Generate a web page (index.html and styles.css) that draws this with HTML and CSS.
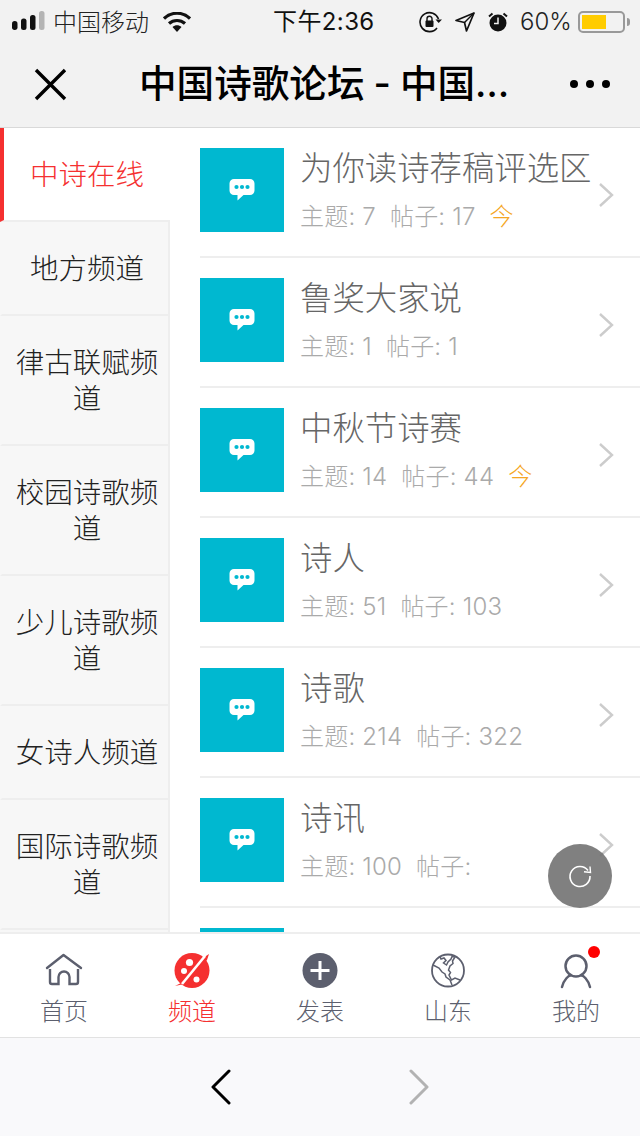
FILE: index.html
```html
<!DOCTYPE html>
<html lang="zh-CN">
<head>
<meta charset="utf-8">
<title>中国诗歌论坛</title>
<link rel="stylesheet" href="styles.css">
</head>
<body>
<div class="app">
  <header class="status">
    <div class="status-left">
      <svg class="signal" width="34" height="22" viewBox="0 0 34 22"><rect x="0" y="10" width="5.5" height="9" rx="2.7" fill="#111"/><rect x="9" y="7.5" width="5.5" height="11.5" rx="2.5" fill="#111"/><rect x="18" y="4" width="5.5" height="15" rx="2.5" fill="#111"/><rect x="27" y="0" width="5.5" height="19" rx="2.5" fill="#b4b4b4"/></svg>
      <span class="carrier">中国移动</span>
      <svg class="wifi" width="28" height="20" viewBox="0 0 28 20"><path d="M1 6.5C8.500 -.5 19.500 -.5 27 6.500" fill="none" stroke="#111" stroke-width="3.200"/><path d="M6 11.500C10.500 7.500 17.500 7.500 22 11.500" fill="none" stroke="#111" stroke-width="3.200"/><path d="M9.500 15C12 12.800 16 12.800 18.500 15L14 20Z" fill="#111"/></svg>
    </div>
    <div class="status-time">下午2:36</div>
    <div class="status-right">
      <svg width="24" height="22" viewBox="0 0 24 22"><path d="M19.500 8A9.500 9.500 0 1 0 18 17" fill="none" stroke="#111" stroke-width="1.600"/><path d="M16.500 8.500H23L19.700 12Z" fill="#111"/><rect x="6.500" y="9.500" width="8" height="6.500" rx="1" fill="#111"/><path d="M8 10V7.800a2.500 2.500 0 0 1 5 0V10" fill="none" stroke="#111" stroke-width="1.400"/></svg>
      <svg class="loc" width="20" height="20" viewBox="0 0 20 20"><path d="M19 1L1 8.500L9.500 10.500L11.500 19Z" fill="none" stroke="#111" stroke-width="1.700" stroke-linejoin="round"/><path d="M19 1L9.500 10.500" stroke="#111" stroke-width="1.500"/></svg>
      <svg class="alarm" width="20" height="20" viewBox="0 0 20 20"><circle cx="10" cy="11" r="8.500" fill="#111"/><path d="M10 5.500V11.500H6" fill="none" stroke="#f2f2f2" stroke-width="1.500"/><path d="M1 4.500L4.500 1.500M19 4.500L15.500 1.500" stroke="#111" stroke-width="2"/></svg>
      <span class="pct">60%</span>
      <div class="battery"><div class="battery-fill"></div></div>
      <div class="battery-nub"></div>
    </div>
  </header>

  <nav class="navbar">
    <svg class="nav-close" width="34" height="34" viewBox="0 0 34 34"><path d="M3 3L32 32M32 3L3 32" stroke="#000" stroke-width="3.400" fill="none"/></svg>
    <div class="nav-title">中国诗歌论坛 - 中国诗歌网</div>
    <div class="nav-more"><i></i><i></i><i></i></div>
  </nav>

  <main class="content">
    <aside class="side">
      <div class="side-item active">中诗在线</div>
      <div class="side-item">地方频道</div>
      <div class="side-item">律古联赋频道</div>
      <div class="side-item">校园诗歌频道</div>
      <div class="side-item">少儿诗歌频道</div>
      <div class="side-item">女诗人频道</div>
      <div class="side-item">国际诗歌频道</div>
    </aside>
    <section class="list">
      <article class="row">
        <div class="tile"><svg width="26" height="24" viewBox="0 0 26 24"><use href="#bubble"/></svg></div>
        <div class="info"><h3 class="name">为你读诗荐稿评选区</h3><p class="meta"><span>主题: 7</span><span>帖子: 17</span><span class="today">今</span></p></div>
        <svg class="chev" width="16" height="26" viewBox="0 0 16 26"><path d="M2 2L14 13L2 24" fill="none" stroke="#ccc" stroke-width="2.400"/></svg>
      </article>
      <article class="row">
        <div class="tile"><svg width="26" height="24" viewBox="0 0 26 24"><use href="#bubble"/></svg></div>
        <div class="info"><h3 class="name">鲁奖大家说</h3><p class="meta"><span>主题: 1</span><span>帖子: 1</span></p></div>
        <svg class="chev" width="16" height="26" viewBox="0 0 16 26"><path d="M2 2L14 13L2 24" fill="none" stroke="#ccc" stroke-width="2.400"/></svg>
      </article>
      <article class="row">
        <div class="tile"><svg width="26" height="24" viewBox="0 0 26 24"><use href="#bubble"/></svg></div>
        <div class="info"><h3 class="name">中秋节诗赛</h3><p class="meta"><span>主题: 14</span><span>帖子: 44</span><span class="today">今</span></p></div>
        <svg class="chev" width="16" height="26" viewBox="0 0 16 26"><path d="M2 2L14 13L2 24" fill="none" stroke="#ccc" stroke-width="2.400"/></svg>
      </article>
      <article class="row">
        <div class="tile"><svg width="26" height="24" viewBox="0 0 26 24"><use href="#bubble"/></svg></div>
        <div class="info"><h3 class="name">诗人</h3><p class="meta"><span>主题: 51</span><span>帖子: 103</span></p></div>
        <svg class="chev" width="16" height="26" viewBox="0 0 16 26"><path d="M2 2L14 13L2 24" fill="none" stroke="#ccc" stroke-width="2.400"/></svg>
      </article>
      <article class="row">
        <div class="tile"><svg width="26" height="24" viewBox="0 0 26 24"><use href="#bubble"/></svg></div>
        <div class="info"><h3 class="name">诗歌</h3><p class="meta"><span>主题: 214</span><span>帖子: 322</span></p></div>
        <svg class="chev" width="16" height="26" viewBox="0 0 16 26"><path d="M2 2L14 13L2 24" fill="none" stroke="#ccc" stroke-width="2.400"/></svg>
      </article>
      <article class="row">
        <div class="tile"><svg width="26" height="24" viewBox="0 0 26 24"><use href="#bubble"/></svg></div>
        <div class="info"><h3 class="name">诗讯</h3><p class="meta"><span>主题: 100</span><span>帖子:</span></p></div>
        <svg class="chev" width="16" height="26" viewBox="0 0 16 26"><path d="M2 2L14 13L2 24" fill="none" stroke="#ccc" stroke-width="2.400"/></svg>
      </article>
      <article class="row">
        <div class="tile"></div>
      </article>
    </section>
    <div class="fab">
      <svg width="26" height="26" viewBox="0 0 26 26"><path d="M21 7.500A10 10 0 1 0 23 13" fill="none" stroke="#fff" stroke-width="1.600"/><path d="M17 8.800L23.500 9.500L23 3.500" fill="none" stroke="#fff" stroke-width="1.400"/></svg>
    </div>
  </main>

  <footer class="tabs">
    <div class="tab">
      <svg width="40" height="40" viewBox="0 0 40 40"><path d="M3 17L19.500 4L37 17" fill="none" stroke="#5c5f6e" stroke-width="2.400" stroke-linecap="round" stroke-linejoin="round"/><path d="M6 18V31a2 2 0 0 0 2 2H14.500V26a5.500 5.500 0 0 1 11 0V33H32a2 2 0 0 0 2-2V18" fill="none" stroke="#5c5f6e" stroke-width="2.400"/></svg>
      <span>首页</span>
    </div>
    <div class="tab on">
      <svg width="40" height="40" viewBox="0 0 40 40"><circle cx="20" cy="19.500" r="17.500" fill="#f53030"/><path d="M3 35L11 31L34 5L37 3L35 9L12 33Z" fill="#f53030"/><path d="M10 33L33 5" stroke="#fff" stroke-width="2.600"/><circle cx="17.500" cy="11.500" r="3.600" fill="#fff"/><circle cx="12" cy="20" r="3" fill="#fff"/><circle cx="24.500" cy="28.500" r="3" fill="#fff"/></svg>
      <span>频道</span>
    </div>
    <div class="tab">
      <svg width="40" height="40" viewBox="0 0 40 40"><circle cx="20" cy="19.500" r="17.500" fill="#5c5f6e"/><path d="M20 10V29M10.500 19.500H29.500" stroke="#fff" stroke-width="3"/></svg>
      <span>发表</span>
    </div>
    <div class="tab">
      <svg width="40" height="40" viewBox="0 0 40 40"><circle cx="20" cy="19.500" r="16" fill="none" stroke="#5c5f6e" stroke-width="1.800"/><path d="M12 5.500L13 8L16 7L18 9.500L15.500 12L18.500 14L20 11L23 8L24 5.500L27 6L24.500 10L25 12.500L22 15L20.500 19L22.500 21.500L21 24L23.500 29L27 27L32 29" fill="none" stroke="#5c5f6e" stroke-width="1.500"/><path d="M5 14L11 17L14 21L17 23L18 26L22 29L24 34" fill="none" stroke="#5c5f6e" stroke-width="1.500"/></svg>
      <span>山东</span>
    </div>
    <div class="tab">
      <svg width="40" height="40" viewBox="0 0 40 40"><circle cx="20" cy="15" r="10.500" fill="none" stroke="#5c5f6e" stroke-width="2.500"/><path d="M6 36C8 28 13 24.500 14.500 24.500M34 36C32 28 27 24.500 25.500 24.500" fill="none" stroke="#5c5f6e" stroke-width="2.500" stroke-linecap="round"/></svg>
      <span>我的</span>
      <i class="badge"></i>
    </div>
  </footer>

  <div class="browser">
    <svg width="22" height="36" viewBox="0 0 22 36"><path d="M19 2L3 18L19 34" fill="none" stroke="#000" stroke-width="3" stroke-linecap="round" stroke-linejoin="round"/></svg>
    <svg width="22" height="36" viewBox="0 0 22 36"><path d="M3 2L19 18L3 34" fill="none" stroke="#b2b2b2" stroke-width="3" stroke-linecap="round" stroke-linejoin="round"/></svg>
  </div>
</div>
<svg class="defs" width="0" height="0"><defs><g id="bubble"><path d="M5 1H21a4.500 4.500 0 0 1 4.500 4.500V12.500A4.500 4.500 0 0 1 21 17H14.500L8.500 22.500V17H5A4.500 4.500 0 0 1 .5 12.500V5.500A4.500 4.500 0 0 1 5 1Z" fill="#fff"/><circle cx="7.500" cy="9" r="2.100" fill="#00b8d0"/><circle cx="13" cy="9" r="2.100" fill="#00b8d0"/><circle cx="18.500" cy="9" r="2.100" fill="#00b8d0"/></g></defs></svg>
</body>
</html>
```
FILE: styles.css
```css
* { box-sizing: border-box; }
html, body { margin: 0; padding: 0; }
body {
  width: 640px;
  height: 1136px;
  overflow: hidden;
  background: #fff;
  font-family: "Liberation Sans", "Noto Sans CJK SC", sans-serif;
}
.defs { position: absolute; }
.app { width: 640px; height: 1136px; display: flex; flex-direction: column; }

.status {
  height: 44px;
  flex: none;
  background: #f2f2f2;
  display: grid;
  grid-template-columns: 273px 146px 1fr;
  align-items: center;
  color: #222;
  font-size: 24px;
  font-family: "Inter", "Noto Sans CJK SC", sans-serif;
}
.status-left { display: flex; align-items: center; padding-left: 12px; }
.carrier { margin-left: 7px; padding-bottom: 3px; color: #222; font-family: "Noto Sans CJK SC", sans-serif; font-weight: 300; line-height: 40px; }
.wifi { margin-left: 14px; }
.status-time { color: #111; line-height: 40px; letter-spacing: .4px; font-family: "Inter", "Noto Sans CJK SC", sans-serif; }
.status-right { display: flex; align-items: center; }
.loc { margin-left: 12px; }
.alarm { margin-left: 13px; }
.pct { margin-left: 12px; padding-bottom: 2px; color: #222; font-family: "Inter", sans-serif; font-weight: 300; }
.battery { margin-left: 6px; width: 47px; height: 22px; border: 2px solid #999; border-radius: 5px; padding: 2px; }
.battery-fill { width: 24px; height: 14px; background: #fc0; }
.battery-nub { width: 3px; height: 8px; margin-left: 2px; background: #999; border-radius: 0 3px 3px 0; }

.navbar {
  height: 84px;
  flex: none;
  background: #f2f2f2;
  border-bottom: 1px solid #d9d9d9;
  display: flex;
  align-items: center;
  padding: 0 30px 3px 33px;
}
.nav-close { flex: none; }
.nav-title {
  width: 378px;
  margin-left: 72px;
  font-family: "Inter", "Noto Sans CJK SC", sans-serif;
  font-size: 37.6px;
  font-weight: 500;
  word-spacing: -1px;
  color: #000;
  white-space: nowrap;
  overflow: hidden;
  text-overflow: ellipsis;
  line-height: 50px;
}
.nav-more { margin-left: auto; display: flex; gap: 8px; }
.nav-more i { width: 8px; height: 8px; border-radius: 50%; background: #000; }

.content { flex: 1; min-height: 0; position: relative; display: flex; overflow: hidden; }
.side { width: 170px; flex: none; background: #f7f7f7; border-right: 2px solid #eee; }
.side-item {
  padding: 27px 8px 29px 12px;
  background: #f7f7f7;
  border-bottom: 2px solid #eee;
  border-left: 2px solid #f7f7f7;
  font-size: 28.5px;
  font-weight: 300;
  line-height: 36px;
  color: #222;
  text-align: center;
  font-family: "Noto Sans CJK SC", sans-serif;
}
.side-item.active {
  margin-right: -2px;
  background: #fff;
  color: #f53030;
  border-left: 4px solid #f53030;
  padding: 27px 10px 29px 10px;
}
.list { flex: 1; min-width: 0; padding-left: 30px; }
.row {
  height: 130px;
  padding-top: 20px;
  border-bottom: 2px solid #eee;
  display: flex;
  align-items: flex-start;
}
.tile {
  width: 84px;
  height: 84px;
  flex: none;
  background: #00b8d0;
  display: flex;
  align-items: center;
  justify-content: center;
}
.info { flex: 1; min-width: 0; margin-left: 16px; font-family: "Inter", "Noto Sans CJK SC", sans-serif; }
.name { margin: 0; font-size: 32.4px; font-weight: 300; line-height: 42px; color: #666; white-space: nowrap; }
.meta { margin: 7px 0 0; font-size: 24px; font-weight: 300; letter-spacing: .2px; line-height: 40px; color: #aaa; display: flex; gap: 14px; white-space: nowrap; }
.today { color: #f5a623; }
.chev { flex: none; margin: 34px 26px 0 0; }
.fab {
  position: absolute;
  left: 548px;
  top: 716px;
  width: 64px;
  height: 64px;
  border-radius: 50%;
  background: rgba(110, 110, 110, .88);
  display: flex;
  align-items: center;
  justify-content: center;
}

.tabs {
  height: 106px;
  flex: none;
  background: #fff;
  border-top: 2px solid #eee;
  border-bottom: 1px solid #e2e2e2;
  display: flex;
}
.tab {
  width: 128px;
  position: relative;
  display: flex;
  flex-direction: column;
  align-items: center;
  padding-top: 17px;
  color: #5c5f6e;
  font-size: 24px;
  font-weight: 300;
  line-height: 34px;
  font-family: "Noto Sans CJK SC", sans-serif;
}
.tab span { margin-top: 2px; }
.tab.on { color: #f53030; }
.badge { position: absolute; left: 76px; top: 12px; width: 12px; height: 12px; border-radius: 50%; background: #f00; }

.browser {
  height: 98px;
  flex: none;
  background: #f9f9fb;
  display: flex;
  align-items: center;
  justify-content: center;
  gap: 176px;
  padding-bottom: 1px;
}
```
